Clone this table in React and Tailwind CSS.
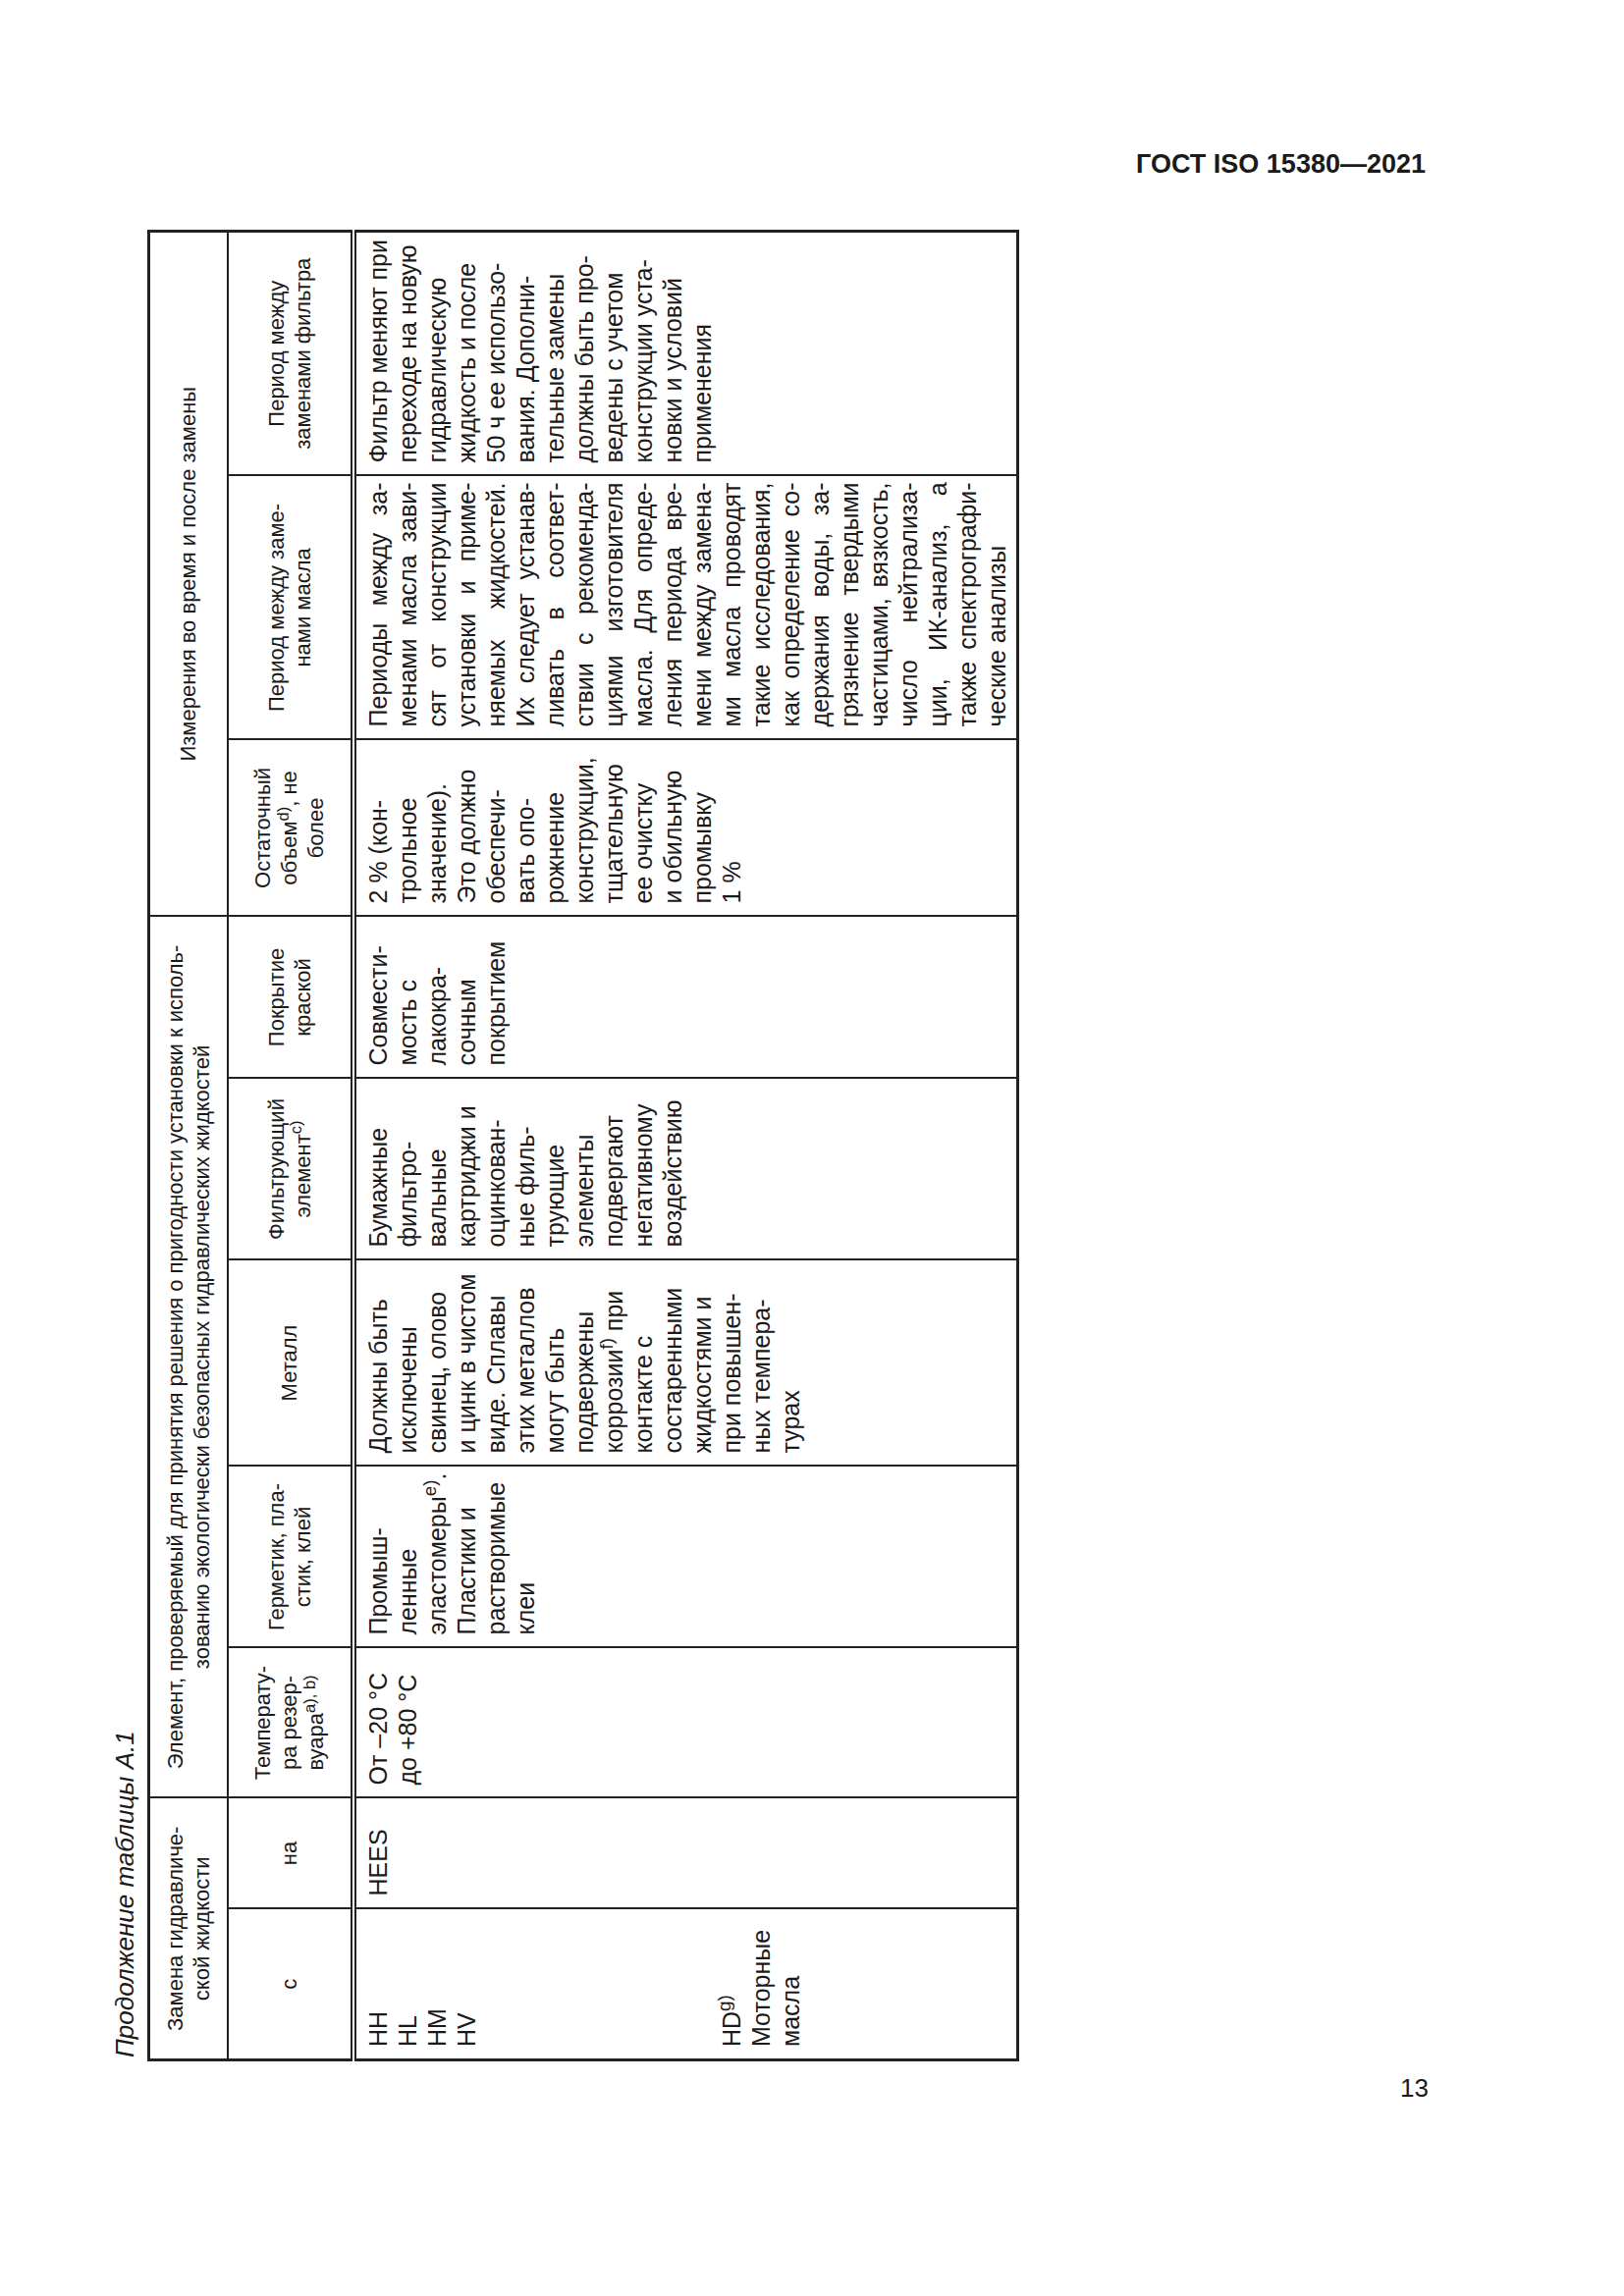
import React from 'react';

// Продолжение таблицы А.1 — страница повернута, таблица идет снизу вверх

const line = 'block whitespace-nowrap';

const colC = ['HH', 'HL', 'HM', 'HV', '', '', '', '', '', '', '', '', <>HD<sup>g)</sup></>, 'Моторные', 'масла'];
const colNa = ['HEES'];
const colTemp = ['От –20 °C', 'до +80 °C'];
const colSeal = ['Промыш-', 'ленные', <>эластомеры<sup>e)</sup>.</>, 'Пластики и', 'растворимые', 'клеи'];
const colMetal = [
  'Должны быть', 'исключены', 'свинец, олово', 'и цинк в чистом', 'виде. Сплавы', 'этих металлов',
  'могут быть', 'подвержены', <>коррозии<sup>f)</sup> при</>, 'контакте с', 'состаренными',
  'жидкостями и', 'при повышен-', 'ных темпера-', 'турах',
];
const colFilter = [
  'Бумажные', 'фильтро-', 'вальные', 'картриджи и', 'оцинкован-', 'ные филь-', 'трующие',
  'элементы', 'подвергают', 'негативному', 'воздействию',
];
const colPaint = ['Совмести-', 'мость с', 'лакокра-', 'сочным', 'покрытием'];
const colRest = [
  '2 % (кон-', 'трольное', 'значение).', 'Это должно', 'обеспечи-', 'вать опо-', 'рожнение',
  'конструкции,', 'тщательную', 'ее очистку', 'и обильную', 'промывку', '1 %',
];
const colOil = [
  'Периоды между за-', 'менами масла зави-', 'сят от конструкции', 'установки и приме-',
  'няемых жидкостей.', 'Их следует устанав-', 'ливать в соответ-', 'ствии с рекоменда-',
  'циями изготовителя', 'масла. Для опреде-', 'ления периода вре-', 'мени между замена-',
  'ми масла проводят', 'такие исследования,', 'как определение со-', 'держания воды, за-',
  'грязнение твердыми', 'частицами, вязкость,', 'число нейтрализа-', 'ции, ИК-анализ, а',
  'также спектрографи-', 'ческие анализы',
];
const colFilt = [
  'Фильтр меняют при', 'переходе на новую', 'гидравлическую', 'жидкость и после',
  '50 ч ее использо-', 'вания. Дополни-', 'тельные замены', 'должны быть про-',
  'ведены с учетом', 'конструкции уста-', 'новки и условий', 'применения',
];

function Lines({ items, justify }) {
  return items.map((l, i) => (
    <span
      key={i}
      className={justify && i < items.length - 1 ? 'block whitespace-nowrap text-justify [text-align-last:justify]' : line}
    >
      {l === '' ? '\u00a0' : l}
    </span>
  ));
}

const th = 'border-2 border-[#222] font-normal text-[22px] leading-[27px] text-center align-middle px-2';
const sub = 'border-2 border-b-[6px] border-double border-[#222] font-normal text-[22px] leading-[27px] text-center align-middle px-2';
const td = 'border-2 border-[#222] align-top text-left pl-[12px] pr-[6px] pt-[7px] text-[25px] leading-[30px]';

export default function App() {
  return (
    <div className="w-[1654px] h-[2339px] overflow-hidden bg-white text-[#1a1a1a] font-['Liberation_Sans','Arial',sans-serif] flex flex-col pt-[154px]">
      <div className="flex justify-end pr-[202px]">
        <h1 className="text-[27px] leading-[27px] font-bold">ГОСТ ISO 15380—2021</h1>
      </div>

      {/* повернутый блок таблицы */}
      <div className="mt-[56px] ml-[112px] w-[923px] h-[1863px]">
        <div className="w-[1863px] h-[923px] origin-top-left -rotate-90 translate-y-[1863px] flex flex-col">
          <p className="h-[30px] leading-[30px] text-[26px] italic pl-[4px] mb-[8px]">Продолжение таблицы А.1</p>
          <table className="w-[1863px] table-fixed border-collapse border-[3px] border-[#222]">
            <colgroup>
              <col className="w-[154px]" />
              <col className="w-[113px]" />
              <col className="w-[153px]" />
              <col className="w-[185px]" />
              <col className="w-[210px]" />
              <col className="w-[185px]" />
              <col className="w-[165px]" />
              <col className="w-[180px]" />
              <col className="w-[269px]" />
              <col className="w-[249px]" />
            </colgroup>
            <thead>
              <tr className="h-[80px]">
                <th colSpan={2} className={th}>Замена гидравличе-<br />ской жидкости</th>
                <th colSpan={5} className={th}>
                  Элемент, проверяемый для принятия решения о пригодности установки к исполь-<br />
                  зованию экологически безопасных гидравлических жидкостей
                </th>
                <th colSpan={3} className={th}>Измерения во время и после замены</th>
              </tr>
              <tr className="h-[128px]">
                <th className={sub}>с</th>
                <th className={sub}>на</th>
                <th className={sub}>Температу-<br />ра резер-<br />вуара<sup>a), b)</sup></th>
                <th className={sub}>Герметик, пла-<br />стик, клей</th>
                <th className={sub}>Металл</th>
                <th className={sub}>Фильтрующий<br />элемент<sup>c)</sup></th>
                <th className={sub}>Покрытие<br />краской</th>
                <th className={sub}>Остаточный<br />объем<sup>d)</sup>, не<br />более</th>
                <th className={sub}>Период между заме-<br />нами масла</th>
                <th className={sub}>Период между<br />заменами фильтра</th>
              </tr>
            </thead>
            <tbody>
              <tr className="h-[677px]">
                <td className={td}><Lines items={colC} /></td>
                <td className={td}><Lines items={colNa} /></td>
                <td className={td}><Lines items={colTemp} /></td>
                <td className={td}><Lines items={colSeal} /></td>
                <td className={td}><Lines items={colMetal} /></td>
                <td className={td}><Lines items={colFilter} /></td>
                <td className={td}><Lines items={colPaint} /></td>
                <td className={td}><Lines items={colRest} /></td>
                <td className={td}><Lines items={colOil} justify /></td>
                <td className={td}><Lines items={colFilt} /></td>
              </tr>
            </tbody>
          </table>
        </div>
      </div>

      <div className="flex justify-end pr-[199px] mt-[14px]">
        <span className="text-[26px] leading-[26px]">13</span>
      </div>
    </div>
  );
}
